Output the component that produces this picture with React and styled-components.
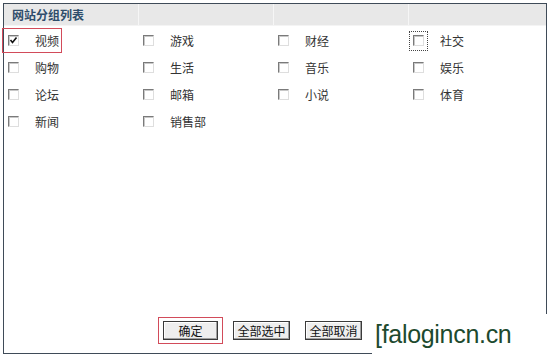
import React from "react";
import styled, { createGlobalStyle } from "styled-components";

const Global = createGlobalStyle`
    html, body {
        margin: 0;
        padding: 0;
        background: #fff;
    }
    body {
        width: 550px;
        height: 358px;
        overflow: hidden;
        font-family: "Noto Sans CJK SC", "DejaVu Sans", sans-serif;
    }
`;

const Page = styled.div`
    position: relative;
    width: 550px;
    height: 358px;
    padding: 3px;
    box-sizing: border-box;
`;

const Panel = styled.div`
    width: 544px;
    height: 351px;
    box-sizing: border-box;
    border: 1px solid #3f4b58;
    display: flex;
    flex-direction: column;
`;

const Header = styled.div`
    display: grid;
    grid-template-columns: 135px 135px 135px 1fr;
    height: 21px;
    background: #e8e8e8;
    border-bottom: 1px solid #f4f4f4;
`;

const HeadCell = styled.div`
    border-right: ${(p) => (p.last ? "none" : "1px solid #f6f6f6")};
    padding-left: 8px;
    font-size: 12px;
    line-height: 21px;
    font-weight: bold;
    color: #2f4d6b;
`;

const Body = styled.div`
    flex: 1;
    display: grid;
    grid-template-columns: 135px 135px 135px 1fr;
    grid-auto-rows: 27px;
    align-content: start;
    padding-top: 1px;
`;

const Cell = styled.label`
    position: relative;
    display: flex;
    align-items: center;
    padding-left: 4px;
    gap: 16px;
    font-size: 12px;
    color: #333;

    &::after {
        content: "";
        display: ${(p) => (p.highlight ? "block" : "none")};
        position: absolute;
        left: -2px;
        top: 1px;
        width: 58px;
        height: 23px;
        border: 1px solid #d24b5a;
    }
`;

const BoxWrap = styled.span`
    display: inline-flex;
    align-items: center;
    justify-content: center;
    margin-left: ${(p) => (p.focus ? "-4px" : "0")};
    margin-right: ${(p) => (p.focus ? "-4px" : "0")};
    outline: ${(p) => (p.focus ? "1px dotted #444" : "none")};
    outline-offset: -1px;
    width: ${(p) => (p.focus ? "19px" : "11px")};
    height: ${(p) => (p.focus ? "20px" : "11px")};
`;

const Box = styled.span`
    display: block;
    width: 11px;
    height: 11px;
    box-sizing: border-box;
    border: 1px solid;
    border-color: #7a7a7a #dedede #dedede #7a7a7a;
    background: #fff;
    box-shadow: inset 1px 1px 0 #c8c8c8;
    position: relative;
`;

const Check = styled.svg`
    position: absolute;
    left: 0;
    top: 0;
`;

const Footer = styled.div`
    height: 34px;
    display: flex;
    align-items: center;
    gap: 15px;
    padding-left: 159px;
    padding-bottom: 6px;
`;

const BtnFrame = styled.span`
    display: inline-flex;
    padding: 3px 4px;
    border: ${(p) => (p.highlight ? "1px solid #d24b5a" : "none")};
    margin: ${(p) => (p.highlight ? "0 -5px 0 -5px" : "0")};
`;

const Button = styled.button`
    height: 19px;
    width: ${(p) => p.w}px;
    padding: 0;
    font-family: "Noto Sans CJK SC", sans-serif;
    font-size: 12px;
    line-height: 17px;
    color: #111;
    background: #eeeeee;
    border: 1px solid #3a3a3a;
    box-shadow: inset -1px -1px 0 #a0a0a0, inset 1px 1px 0 #fff;
    cursor: pointer;
`;

const Watermark = styled.div`
    position: absolute;
    left: 372px;
    top: 314px;
    width: 178px;
    height: 44px;
    background: #fff;
    color: #1d4a2e;
    font-family: "Liberation Sans", sans-serif;
    font-weight: 300;
    font-size: 25px;
    line-height: 40px;
    letter-spacing: -0.3px;
    padding-left: 3px;
    box-sizing: border-box;
    white-space: nowrap;
`;

const items = [
    "视频", "游戏", "财经", "社交",
    "购物", "生活", "音乐", "娱乐",
    "论坛", "邮箱", "小说", "体育",
    "新闻", "销售部",
];

const App = () => {
    return (
        <Page>
            <Global />
            <Panel>
                <Header>
                    <HeadCell>网站分组列表</HeadCell>
                    <HeadCell />
                    <HeadCell />
                    <HeadCell last />
                </Header>
                <Body>
                    {items.map((name, i) => (
                        <Cell key={name} highlight={i === 0}>
                            <BoxWrap focus={i === 3}>
                                <Box>
                                    {i === 0 && (
                                        <Check width="9" height="9" viewBox="0 0 9 9">
                                            <path d="M1.5 4 L3.5 6.5 L7.5 1.5" fill="none" stroke="#111" strokeWidth="1.6" />
                                        </Check>
                                    )}
                                </Box>
                            </BoxWrap>
                            <span>{name}</span>
                        </Cell>
                    ))}
                </Body>
                <Footer>
                    <BtnFrame highlight>
                        <Button w={55}>确定</Button>
                    </BtnFrame>
                    <Button w={57}>全部选中</Button>
                    <Button w={57}>全部取消</Button>
                </Footer>
            </Panel>
            <Watermark>[falogincn.cn</Watermark>
        </Page>
    );
};

export default App;
